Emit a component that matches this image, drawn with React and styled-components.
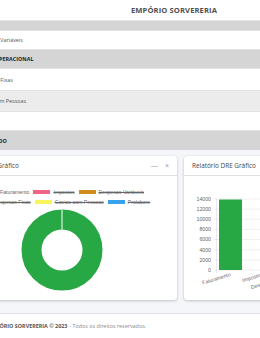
import styled, { createGlobalStyle } from 'styled-components';

const GlobalStyle = createGlobalStyle`
  html, body { margin: 0; padding: 0; background: #f4f6f9; }
  body { font-family: "Open Sans", "Liberation Sans", sans-serif; }
`;

const Viewport = styled.div`
  width: 260px;
  height: 338px;
  overflow: hidden;
  background: #f4f6f9;
`;

const Page = styled.div`
  width: 475px;
  margin-left: -58px;
  display: flex;
  flex-direction: column;
`;

const TopBar = styled.header`
  height: 20px;
  background: #ffffff;
  display: flex;
  align-items: center;
  justify-content: center;
  padding-right: 11px;
  font-size: 7.6px;
  font-weight: 700;
  color: #505050;
  letter-spacing: 0.1px;
`;

const Table = styled.div`
  display: flex;
  flex-direction: column;
  background: #ffffff;
`;

const Row = styled.div`
  height: ${(p) => p.$h || 20}px;
  display: flex;
  align-items: center;
  padding-left: 33px;
  font-size: 5.4px;
  font-weight: ${(p) => (p.$strong ? 700 : 400)};
  color: ${(p) => (p.$strong ? '#222' : '#555')};
  background: ${(p) => (p.$tone === 'dark' ? '#d5d5d5' : p.$tone === 'light' ? '#ececec' : '#ffffff')};
  border-top: 1px solid #e3e3e3;
  box-sizing: border-box;
  overflow: hidden;
  white-space: nowrap;
`;

const Cards = styled.div`
  display: flex;
  gap: 7px;
  padding: 6px 5px 0;
`;

const Card = styled.section`
  width: 230px;
  height: 144px;
  flex-shrink: 0;
  background: #ffffff;
  border-radius: 3px;
  box-shadow: 0 0 1px rgba(0, 0, 0, 0.13), 0 1px 3px rgba(0, 0, 0, 0.2);
  display: flex;
  flex-direction: column;
`;

const CardHeader = styled.div`
  height: 20px;
  flex-shrink: 0;
  display: flex;
  align-items: center;
  justify-content: space-between;
  padding: 0 8px;
  border-bottom: 1px solid rgba(0, 0, 0, 0.125);
  box-sizing: border-box;
`;

const CardTitle = styled.h3`
  margin: 0;
  font-size: 6.4px;
  font-weight: 400;
  color: #444;
`;

const Tools = styled.div`
  display: flex;
  gap: 7px;
  color: #9a9a9a;
  font-size: 7px;
  font-family: "Liberation Sans", sans-serif;
`;

const CardBody = styled.div`
  flex: 1;
  display: flex;
  flex-direction: column;
  align-items: center;
  padding-top: 11px;
`;

const LegendRow = styled.div`
  height: 10px;
  display: flex;
  align-items: center;
  justify-content: center;
  gap: 4px;
  font-family: "Liberation Sans", sans-serif;
  font-size: 5.2px;
  color: #666;
`;

const LegendItem = styled.span`
  display: flex;
  align-items: center;
  gap: 3px;
  text-decoration: ${(p) => (p.$hidden ? 'line-through' : 'none')};
`;

const Swatch = styled.i`
  width: 17px;
  height: 4px;
  background: ${(p) => p.$color};
`;

const Donut = styled.svg`
  margin-top: 2px;
  display: block;
`;

const Footer = styled.footer`
  margin-top: 13px;
  height: 24px;
  background: #ffffff;
  border-top: 1px solid #dee2e6;
  display: flex;
  align-items: center;
  padding-left: 46px;
  font-size: 5.4px;
  color: #8a8a8a;
`;

const Brand = styled.strong`
  color: #555;
  font-weight: 700;
  margin-right: 2px;
`;

const legend = [
  [
    { label: 'Faturamento', color: '#28a745' },
    { label: 'Impostos', color: '#f56384', hidden: true },
    { label: 'Despesas Variáveis', color: '#d08c1c', hidden: true },
  ],
  [
    { label: 'Despesas Fixas', color: '#b06b2a', hidden: true },
    { label: 'Gastos com Pessoas', color: '#f6f55c', hidden: true },
    { label: 'Prolabore', color: '#36a2eb', hidden: true },
  ],
];

const ticks = [14000, 12000, 10000, 8000, 6000, 4000, 2000, 0];
const cats = ['Faturamento', 'Impostos', 'Despesas Variáveis', 'Despesas Fixas'];

function BarChart() {
  const top = 23;
  const bottom = 94;
  const y = (v) => bottom - (v / 14000) * (bottom - top);
  return (
    <svg width="230" height="124" style={{ display: 'block' }}>
      {ticks.map((t) => (
        <g key={t}>
          <line x1="30" x2="230" y1={y(t)} y2={y(t)} stroke="rgba(0,0,0,0.1)" strokeWidth="0.6" />
          <text x="27" y={y(t) + 1.8} textAnchor="end" fontSize="5.2" fill="#666" fontFamily="Liberation Sans, sans-serif">
            {t}
          </text>
        </g>
      ))}
      <line x1="32.5" x2="32.5" y1={top} y2={bottom + 3} stroke="rgba(0,0,0,0.15)" strokeWidth="0.6" />
      <rect x="35" y={y(13900)} width="23" height={bottom - y(13900)} fill="#28a745" />
      {cats.map((c, i) => {
        const cx = 47 + i * 32;
        return (
          <text
            key={c}
            x={cx}
            y={bottom + 6}
            textAnchor="end"
            fontSize="5.2"
            fill="#666"
            fontFamily="Liberation Sans, sans-serif"
            transform={`rotate(-17 ${cx} ${bottom + 6})`}
          >
            {c}
          </text>
        );
      })}
    </svg>
  );
}

export default function App() {
  return (
    <Viewport>
      <GlobalStyle />
      <Page>
        <TopBar>EMPÓRIO SORVERERIA</TopBar>
        <Table>
          <Row $tone="dark" $h={10} />
          <Row $h={19}>Despesas Variáveis</Row>
          <Row $tone="dark" $h={19} $strong>
            LUCRO OPERACIONAL
          </Row>
          <Row $h={22}>Despesas Fixas</Row>
          <Row $tone="light" $h={21}>Gastos com Pessoas</Row>
          <Row $h={19}>Prolabore</Row>
          <Row $tone="dark" $strong>
            RESULTADO
          </Row>
        </Table>
        <Cards>
          <Card>
            <CardHeader>
              <CardTitle>Relatório DRE Gráfico</CardTitle>
              <Tools>
                <span>—</span>
                <span>×</span>
              </Tools>
            </CardHeader>
            <CardBody>
              {legend.map((row, i) => (
                <LegendRow key={i}>
                  {row.map((it) => (
                    <LegendItem key={it.label} $hidden={it.hidden}>
                      <Swatch $color={it.color} />
                      {it.label}
                    </LegendItem>
                  ))}
                </LegendRow>
              ))}
              <Donut width="82" height="82" viewBox="0 0 82 82">
                <circle cx="41" cy="41" r="30.5" fill="none" stroke="#28a745" strokeWidth="20" />
                <line x1="41" x2="41" y1="0.5" y2="20.5" stroke="#fff" strokeWidth="1" />
              </Donut>
            </CardBody>
          </Card>
          <Card>
            <CardHeader>
              <CardTitle>Relatório DRE Gráfico</CardTitle>
              <Tools>
                <span>—</span>
                <span>×</span>
              </Tools>
            </CardHeader>
            <BarChart />
          </Card>
        </Cards>
        <Footer>
          <Brand>EMPÓRIO SORVERERIA © 2023</Brand> - Todos os direitos reservados.
        </Footer>
      </Page>
    </Viewport>
  );
}
